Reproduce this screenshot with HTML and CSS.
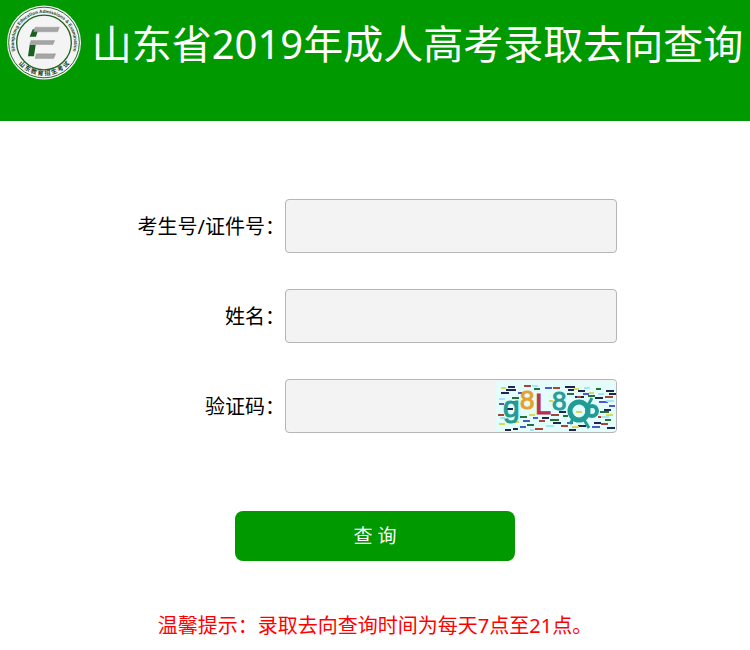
FILE: index.html
```html
<!DOCTYPE html>
<html lang="zh-CN">
<head>
<meta charset="utf-8">
<meta name="viewport" content="width=device-width, initial-scale=1">
<title>山东省2019年成人高考录取去向查询</title>
<link rel="stylesheet" href="styles.css">
</head>
<body>
<header class="banner">
  <svg class="logo" viewBox="20 15 222 222" aria-hidden="true">
    <defs>
      <path id="arc-top" d="M46 157 A90 90 0 1 1 216 157"/>
      <path id="arc-bottom" d="M36 156 A100 100 0 0 0 226 156"/>
    </defs>
    <circle cx="131" cy="126" r="111" fill="#f4f4f4"/>
    <circle cx="131" cy="126" r="106" fill="none" stroke="#24702c" stroke-width="3"/>
    <circle cx="131" cy="126" r="82" fill="none" stroke="#1d6324" stroke-width="4"/>
    <text class="ring-en"><textPath href="#arc-top" startOffset="50%">Shangdong Education Admissions &amp; Examination</textPath></text>
    <text class="ring-zh"><textPath href="#arc-bottom" startOffset="50%">山 东 教 育 招 生 考 试</textPath></text>
    <path fill="#176020" d="M97 86h17l-7 23H88zM88 133h18l-5 34H83z"/>
    <path fill="#a5a5a5" stroke="#858585" stroke-width="1" d="M104 80h73l-5 14h-72zM92 120h71l-5 12H88zM108 160h58l-6 14h-56z"/>
  </svg>
  <h1 class="title">山东省2019年成人高考录取去向查询</h1>
</header>
<main class="content">
  <form class="query">
    <div class="row">
      <label for="examinee">考生号/证件号：</label>
      <div class="field"><input id="examinee" type="text"></div>
    </div>
    <div class="row">
      <label for="fullname">姓名：</label>
      <div class="field"><input id="fullname" type="text"></div>
    </div>
    <div class="row">
      <label for="code">验证码：</label>
      <div class="field">
        <input id="code" type="text">
        <svg class="captcha" viewBox="0 0 120 50" role="img" aria-label="验证码">
          <rect width="120" height="50" fill="#e2fdfb"/>
          <g fill="none" stroke-width="2">
            <path stroke="#20264e" d="M12 6h7M10 9h10M5 12h8M69 6h10M72 9h6M82 10h7M79 16h9M110 10h8M113 13h7M99 17h8M10 28h7M63 31h7M57 42h8M82 45h8M9 49h6M17 48h5M73 49h7M111 47h8M98 42h7M108 29h7M46 37h7"/>
            <path stroke="#287039" d="M16 17h7M38 8h6M71 13h7M100 8h5M92 15h7M24 36h7M54 39h9M67 35h5M104 31h9M109 39h6M31 44h7"/>
            <path stroke="#a64536" d="M28 5h7M57 7h7M81 16h4M109 16h8M2 34h6M55 34h8M43 40h6M105 43h7M39 48h8M65 45h7M102 36h6M14 21h5"/>
            <path stroke="#5059c4" d="M22 12h4M49 7h7M87 13h6M103 21h9M113 25h6M3 23h5M27 40h7M37 37h5M71 42h6M24 46h6M96 46h8"/>
            <path stroke="#d8d85a" d="M5 7h5M53 20h4M78 8h5M93 12h5M110 34h7M33 34h6M76 46h7M80 31h6M17 41h6M3 43h6"/>
            <path stroke="#a7e4f7" d="M36 5h6M88 7h6M102 13h6M3 18h6M110 20h8M4 37h5M50 45h8M105 36h8M34 49h4"/>
          </g>
          <text class="glyph glyph-g" x="7" y="36">g</text>
          <text class="glyph glyph-orange" x="24" y="28">8</text>
          <text class="glyph glyph-red" x="39" y="33">L</text>
          <text class="glyph glyph-eight" x="56" y="29">8</text>
          <g fill="none" stroke="#209b95">
            <ellipse cx="83" cy="30" rx="9" ry="9" stroke-width="5"/>
            <ellipse cx="96" cy="30" rx="5" ry="5" stroke-width="4"/>
            <path stroke-width="3" d="M87 37l6 10M77 38l-3 5M91 26l5-9"/>
          </g>
        </svg>
      </div>
    </div>
    <button class="submit" type="submit">查 询</button>
  </form>
  <p class="tip">温馨提示：录取去向查询时间为每天7点至21点。</p>
</main>
</body>
</html>
```

FILE: styles.css
```css
* {
  box-sizing: border-box;
}

body {
  margin: 0;
  background: #fff;
  color: #000;
  font-family: "Noto Sans", "Noto Sans CJK SC", sans-serif;
  font-size: 20px;
  line-height: 30px;
}

.banner {
  display: flex;
  justify-content: center;
  align-items: flex-start;
  gap: 11px;
  padding: 5px 6px 39px;
  background: #009900;
}

.logo {
  flex: none;
  width: 74px;
  height: 75px;
}

.ring-en,
.ring-zh {
  fill: #183b1c;
  text-anchor: middle;
  font-weight: 700;
}

.ring-en {
  font-family: "Liberation Sans", sans-serif;
  font-size: 14px;
}

.ring-zh {
  font-family: "Noto Sans CJK SC", sans-serif;
  font-size: 18px;
}

.title {
  margin: 0;
  color: #fff;
  font-size: 40px;
  font-weight: 400;
  line-height: 77px;
  white-space: nowrap;
}

.content {
  padding: 78px 16px 10px;
}

.query {
  display: flex;
  flex-direction: column;
  gap: 36px;
}

.row {
  display: grid;
  grid-template-columns: minmax(148px, 269px) minmax(0, 332px);
  justify-content: center;
  align-items: center;
  padding-right: 117px;
}

.row label {
  padding-top: 2px;
  text-align: right;
  white-space: nowrap;
}

.field {
  display: flex;
  height: 54px;
  border: 1px solid #b5b5b5;
  border-radius: 4px;
  background: #f3f3f3;
  overflow: hidden;
}

.field input {
  flex: 1;
  min-width: 0;
  padding: 0 10px;
  border: 0;
  background: transparent;
  font: inherit;
}

.captcha {
  flex: none;
  align-self: center;
  width: 120px;
  height: 50px;
}

.glyph {
  font-family: "Liberation Sans", sans-serif;
  stroke-width: 1px;
}

.glyph-g {
  fill: #229b95;
  stroke: #229b95;
  font-size: 30px;
}

.glyph-orange {
  fill: #e6a02b;
  stroke: #e6a02b;
  font-size: 26px;
}

.glyph-red {
  fill: #b6324b;
  stroke: #b6324b;
  font-size: 29px;
}

.glyph-eight {
  fill: #2a9d98;
  stroke: #2a9d98;
  font-size: 26px;
}

.submit {
  align-self: center;
  width: 280px;
  height: 50px;
  margin-top: 42px;
  padding: 0;
  border: 0;
  border-radius: 8px;
  background: #009900;
  color: #fff;
  font: inherit;
  font-size: 19px;
}

.tip {
  margin: 50px 0 0;
  color: #f00;
  text-align: center;
}
```
